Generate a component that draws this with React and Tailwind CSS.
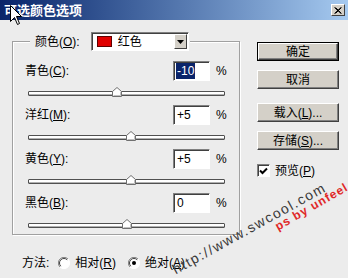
const font = "font-['Liberation_Sans','Noto_Sans_CJK_SC',sans-serif]"

const rows = [
  { name: '青色', key: 'C', value: '-10', selected: true },
  { name: '洋红', key: 'M', value: '+5' },
  { name: '黄色', key: 'Y', value: '+5' },
  { name: '黑色', key: 'B', value: '0' },
]

function Label({ name, k, suffix = ':' }) {
  return (
    <span>
      {name}(<span className="underline">{k}</span>){suffix}
    </span>
  )
}

function Sunken({ className, children }) {
  return (
    <div className={`border border-t-[#808080] border-l-[#808080] border-r-white border-b-white shadow-[inset_1px_1px_0_#404040] bg-white ${className}`}>
      {children}
    </div>
  )
}

function Slider({ value }) {
  const pct = (parseInt(value, 10) + 100) / 200
  return (
    <div className="relative h-[20px] pt-[10px] ml-[3px] mr-[2px]">
      <div className="h-[5px] border border-[#505050] bg-white shadow-[inset_0_-1px_0_#b0b0b0] rounded-[1px]" />
      <svg
        width="10"
        height="10"
        viewBox="0 0 10 10"
        className="absolute top-[6px]"
        style={{ left: `calc(${pct * 100}% - 5px)` }}
      >
        <path d="M0.5 9.5 V4.5 L5 0.5 L9.5 4.5 V9.5 Z" fill="#fff" stroke="#707070" />
        <path d="M1.5 8.5 H8.5 V5" fill="none" stroke="#c0c0c0" />
      </svg>
    </div>
  )
}

function Button({ children, primary }) {
  const inner = (
    <div className="h-full flex items-center justify-center bg-[#d4d0c8] border border-t-white border-l-white border-r-[#404040] border-b-[#404040] shadow-[inset_-1px_-1px_0_#808080]">
      {children}
    </div>
  )
  return (
    <div className={`h-[19px] ${primary ? 'border border-black' : ''}`}>{inner}</div>
  )
}

function Radio({ checked }) {
  return (
    <svg width="12" height="12" viewBox="0 0 12 12" className="block">
      <circle cx="6" cy="6" r="5.5" fill="#fff" />
      <path d="M10 2 A5.5 5.5 0 0 0 2 10" fill="none" stroke="#808080" />
      <path d="M9.2 2.8 A4.5 4.5 0 0 0 2.8 9.2" fill="none" stroke="#404040" />
      <path d="M2 10 A5.5 5.5 0 0 0 10 2" fill="none" stroke="#ffffff" />
      {checked && <circle cx="6" cy="6" r="2" fill="#000" />}
    </svg>
  )
}

export default function App() {
  return (
    <div className={`relative w-[348px] h-[278px] overflow-hidden bg-[#ececec] text-[12px] leading-none text-black ${font}`}>
      {/* Title bar */}
      <div className="h-[20px] flex items-center justify-between pl-[4px] pr-[3px] bg-gradient-to-r from-[#0a246a] to-[#a6caf0]">
        <span className="text-white font-bold text-[13px]">可选颜色选项</span>
        <div className="w-[14px] h-[12px] flex items-center justify-center bg-[#d4d0c8] border border-t-white border-l-white border-r-[#404040] border-b-[#404040]">
          <svg width="8" height="7" viewBox="0 0 8 7">
            <path d="M0.5 0.5 L7 6.5 M1.5 0.5 L7.5 6.5 M7 0.5 L0.5 6.5 M7.5 0.5 L1.5 6.5" stroke="#000" strokeWidth="1" />
          </svg>
        </div>
      </div>

      <div className="flex">
        {/* Group box */}
        <fieldset className="ml-[12px] mt-[12px] w-[228px] px-[12px] pt-[10px] pb-[1px] border border-[#a0a0a0] shadow-[inset_1px_1px_0_#fff,1px_1px_0_#fff]">
          <legend className="ml-[5px] pl-[5px] pr-[1px] bg-[#ececec]">
            <div className="flex items-center">
              <span className="mr-[11px]"><Label name="颜色" k="O" /></span>
              <Sunken className="w-[98px] h-[19px] flex items-center">
                <div className="ml-[5px] w-[15px] h-[11px] bg-[#e00000] border border-[#600000]" />
                <span className="ml-[6px] flex-1">红色</span>
                <div className="w-[13px] h-[15px] mr-[1px] flex items-center justify-center bg-[#d4d0c8] border border-t-white border-l-white border-r-[#404040] border-b-[#404040]">
                  <svg width="7" height="4" viewBox="0 0 7 4">
                    <path d="M0 0 H7 L3.5 4 Z" fill="#000" />
                  </svg>
                </div>
              </Sunken>
            </div>
          </legend>

          <div className="flex flex-col gap-[4px]">
            {rows.map((r) => (
              <div key={r.key}>
                <div className="h-[20px] flex items-center">
                  <span className="flex-1"><Label name={r.name} k={r.key} /></span>
                  <Sunken className="w-[37px] h-[20px] flex items-center pl-[2px]">
                    <span className={r.selected ? 'bg-[#0a246a] text-white px-[1px] py-[2px]' : 'px-[1px]'}>
                      {r.value}
                    </span>
                  </Sunken>
                  <span className="ml-[6px] w-[11px]">%</span>
                </div>
                <Slider value={r.value} />
              </div>
            ))}
          </div>
        </fieldset>

        {/* Buttons */}
        <div className="ml-[17px] mt-[22px] w-[82px] flex flex-col">
          <Button primary>确定</Button>
          <div className="mt-[9px]"><Button>取消</Button></div>
          <div className="mt-[14px]"><Button><Label name="载入" k="L" suffix="..." /></Button></div>
          <div className="mt-[9px]"><Button><Label name="存储" k="S" suffix="..." /></Button></div>
          <div className="mt-[14px] flex items-center">
            <Sunken className="w-[13px] h-[13px] flex items-center justify-center">
              <svg width="9" height="8" viewBox="0 0 9 8">
                <path d="M1 3.5 L3.5 6 L8 1.5" fill="none" stroke="#000" strokeWidth="2" />
              </svg>
            </Sunken>
            <span className="ml-[5px]"><Label name="预览" k="P" suffix="" /></span>
          </div>
        </div>
      </div>

      {/* Method */}
      <div className="mt-[20px] h-[16px] pl-[22px] flex items-center">
        <span>方法:</span>
        <span className="ml-[9px]"><Radio /></span>
        <span className="ml-[5px]"><Label name="相对" k="R" suffix="" /></span>
        <span className="ml-[12px]"><Radio checked /></span>
        <span className="ml-[5px]"><Label name="绝对" k="A" suffix="" /></span>
      </div>

      {/* Watermark */}
      <span className="absolute left-[170px] top-[264px] origin-top-left -rotate-[29deg] text-[14px] leading-none tracking-[1.5px] text-[#3a3a3a] font-['Liberation_Sans',sans-serif] whitespace-nowrap">
        http://www.swcool.com
      </span>
      <span className="absolute left-[273px] top-[222px] origin-top-left -rotate-[30deg] text-[12px] font-bold leading-none tracking-[1px] text-[#e02828] font-['Liberation_Sans',sans-serif] whitespace-nowrap">
        ps by unfeel
      </span>

      {/* Mouse cursor */}
      <svg className="absolute left-[10px] top-[5px]" width="13" height="21" viewBox="0 0 13 21">
        <path d="M0.5 0.5 V16.5 L4.5 12.5 L7.5 19.5 L9.5 18.5 L6.5 11.5 H11.5 Z" fill="#fff" stroke="#000" />
      </svg>
    </div>
  )
}
